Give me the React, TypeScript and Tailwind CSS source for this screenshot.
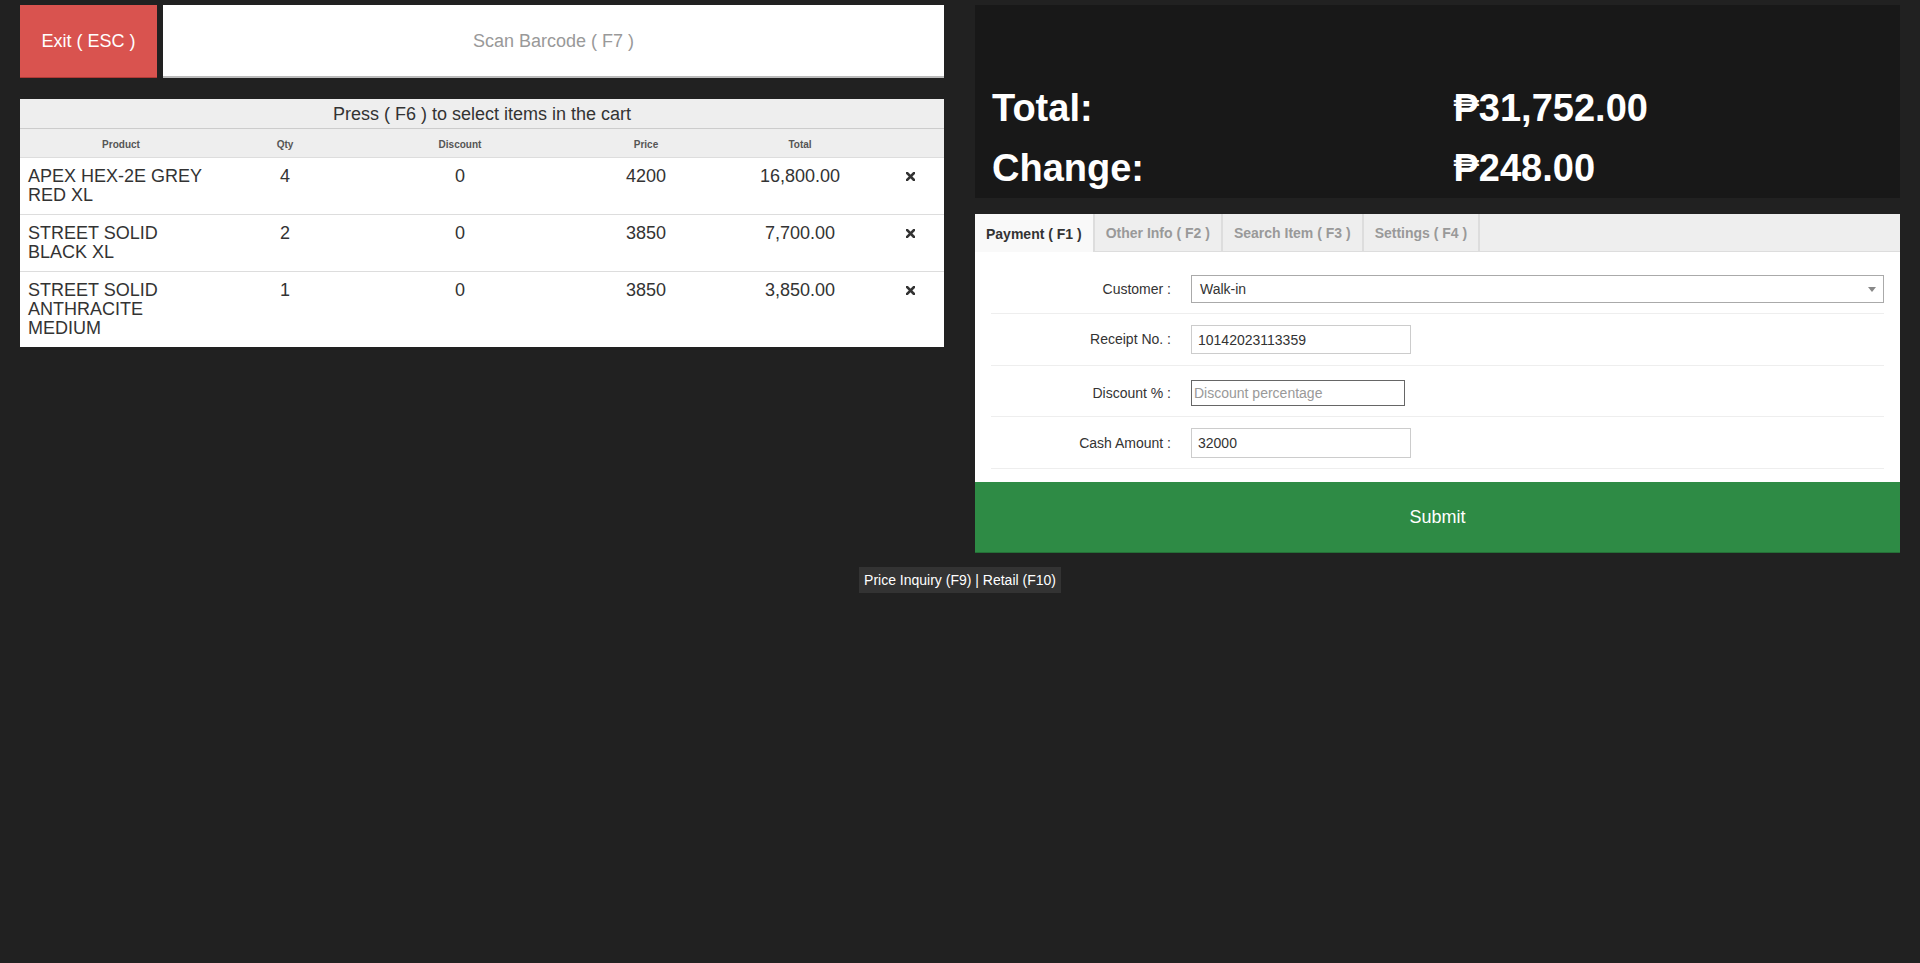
import React from "react";

type CartItem = {
  name: string;
  qty: number;
  discount: number;
  price: number;
  total: string;
};

const cart: CartItem[] = [
  { name: "APEX HEX-2E GREY RED XL", qty: 4, discount: 0, price: 4200, total: "16,800.00" },
  { name: "STREET SOLID BLACK XL", qty: 2, discount: 0, price: 3850, total: "7,700.00" },
  { name: "STREET SOLID ANTHRACITE MEDIUM", qty: 1, discount: 0, price: 3850, total: "3,850.00" },
];

const tabs = ["Payment ( F1 )", "Other Info ( F2 )", "Search Item ( F3 )", "Settings ( F4 )"];

const RemoveIcon = () => (
  <svg width="9" height="9" viewBox="0 0 9 9" className="inline-block">
    <path d="M1 1 L8 8 M8 1 L1 8" stroke="#333" strokeWidth="2.6" strokeLinecap="square" />
  </svg>
);

const CartTable = () => {
  return (
    <div className="mt-[21px] bg-white">
      <div className="h-[30px] bg-[#eee] border-b border-[#ccc] flex items-center justify-center pt-px text-[18px] text-[#333]">
        Press ( F6 ) to select items in the cart
      </div>
      <table className="w-full table-fixed border-collapse text-[#333]">
        <colgroup>
          <col className="w-[202px]" />
          <col className="w-[126px]" />
          <col className="w-[224px]" />
          <col className="w-[148px]" />
          <col className="w-[160px]" />
          <col />
        </colgroup>
        <thead>
          <tr className="h-[28px] bg-[#eee] border-b border-[#ddd] text-[10px] font-bold text-[#555]">
            <th className="font-bold pt-[3px]">Product</th>
            <th className="font-bold pt-[3px]">Qty</th>
            <th className="font-bold pt-[3px]">Discount</th>
            <th className="font-bold pt-[3px]">Price</th>
            <th className="font-bold pt-[3px]">Total</th>
            <th></th>
          </tr>
        </thead>
        <tbody>
          {cart.map((item, i) => (
            <tr
              key={item.name}
              className={`text-[18px] leading-[19px] align-top ${i < cart.length - 1 ? "border-b border-[#ddd]" : ""}`}
            >
              <td className="pl-2 pr-2 pt-[9px] pb-[9px]">{item.name}</td>
              <td className="text-center pt-[9px]">{item.qty}</td>
              <td className="text-center pt-[9px]">{item.discount}</td>
              <td className="text-center pt-[9px]">{item.price}</td>
              <td className="text-center pt-[9px]">{item.total}</td>
              <td className="text-center pt-[9px] pr-1">
                <RemoveIcon />
              </td>
            </tr>
          ))}
        </tbody>
      </table>
    </div>
  );
};

const FormRow = ({ label, children, className }: { label: string; children: React.ReactNode; className: string }) => (
  <div className={`flex items-center border-b border-[#eee] ${className}`}>
    <label className="w-[180px] text-right text-[14px] text-[#333]">{label}</label>
    <div className="flex-1 pl-5 flex">{children}</div>
  </div>
);

const PaymentForm = () => {
  return (
    <div className="bg-white">
      <div className="h-[38px] bg-[#eee] border-b border-[#ddd] flex text-[14px] font-bold">
        {tabs.map((t, i) => (
          <div
            key={t}
            className={`px-[11px] flex items-center pt-[2px] border-r-2 border-[#ddd] ${i === 0 ? "bg-[#f9f9f9] text-[#333] -mb-px" : "text-[#999]"}`}
          >
            {t}
          </div>
        ))}
      </div>
      <div className="px-4 pt-3 pb-[13px]">
        <FormRow label="Customer :" className="pt-[11px] pb-[10px]">
          <div className="flex-1 h-[28px] border border-[#aaa] flex items-center justify-between pl-2 pr-[7px] text-[14px] text-[#333]">
            <span>Walk-in</span>
            <svg width="8" height="5" viewBox="0 0 8 5">
              <path d="M0 0 H8 L4 5 Z" fill="#888" />
            </svg>
          </div>
        </FormRow>
        <FormRow label="Receipt No. :" className="pt-[11px] pb-[11px]">
          <input
            readOnly
            value="10142023113359"
            className="w-[220px] h-[29px] border border-[#ccc] px-[6px] text-[14px] text-[#333] outline-none"
          />
        </FormRow>
        <FormRow label="Discount % :" className="pt-[14px] pb-[10px]">
          <input
            placeholder="Discount percentage"
            className="w-[214px] h-[26px] border border-[#666] px-[2px] text-[14px] text-[#333] placeholder:text-[#999] outline-none"
          />
        </FormRow>
        <FormRow label="Cash Amount :" className="pt-[11px] pb-[10px]">
          <input
            readOnly
            value="32000"
            className="w-[220px] h-[30px] border border-[#ccc] px-[6px] text-[14px] text-[#333] outline-none"
          />
        </FormRow>
      </div>
      <button className="w-full h-[71px] bg-[#2e8b45] text-white text-[18px] border-b border-[#256f37]">Submit</button>
    </div>
  );
};

export default function App() {
  return (
    <div className="min-h-[963px] bg-[#212121] font-['Liberation_Sans',Arial,sans-serif]">
      <div className="flex">
        <div className="w-1/2 pl-5 pr-4 pt-[5px]">
          <div className="flex gap-[6px] h-[73px]">
            <button className="w-[137px] bg-[#d9534f] text-white text-[18px] border-b border-[#b03a36]">Exit ( ESC )</button>
            <input
              placeholder="Scan Barcode ( F7 )"
              className="flex-1 bg-white text-center text-[18px] pt-[2px] text-[#333] placeholder:text-[#999] border-b-2 border-[#bbb] outline-none"
            />
          </div>
          <CartTable />
        </div>
        <div className="w-1/2 pl-[15px] pr-5 pt-[5px]">
          <div className="bg-[#181818] pt-[73px] text-white text-[38px] font-bold leading-[60px]">
            <div className="grid grid-cols-2 px-[17px]">
              <span>Total:</span>
              <span className="pl-4">₱31,752.00</span>
            </div>
            <div className="grid grid-cols-2 px-[17px]">
              <span>Change:</span>
              <span className="pl-4">₱248.00</span>
            </div>
          </div>
          <div className="mt-4">
            <PaymentForm />
          </div>
        </div>
      </div>
      <div className="flex justify-center mt-[14px]">
        <div className="bg-[#333] text-white text-[14px] px-[5px] h-[26px] flex items-center">
          Price Inquiry (F9) | Retail (F10)
        </div>
      </div>
    </div>
  );
}
